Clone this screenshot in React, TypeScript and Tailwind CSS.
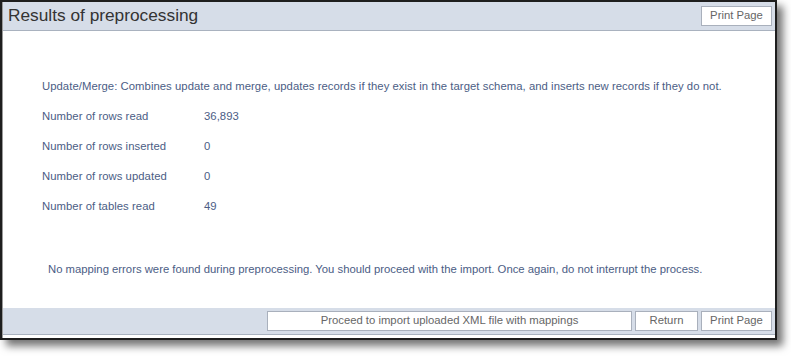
import React from 'react';

const stats = [
    { label: 'Number of rows read', value: '36,893' },
    { label: 'Number of rows inserted', value: '0' },
    { label: 'Number of rows updated', value: '0' },
    { label: 'Number of tables read', value: '49' },
];

function Btn({ children, className = '' }: { children: React.ReactNode; className?: string }) {
    return (
        <button
            className={`h-[20px] border border-[#a9b0bc] bg-white text-[11.3px] leading-none text-[#666666] ${className}`}
        >
            {children}
        </button>
    );
}

export default function App() {
    return (
        <div className="w-[791px] h-[356px] bg-white" style={{ fontFamily: '"Liberation Sans", Arial, sans-serif' }}>
            <div className="box-border w-[777px] h-[340px] border-2 border-[#1e1e1e] bg-white shadow-[6px_6px_8px_rgba(0,0,0,0.55)]">
                <div className="flex flex-col h-full border-l border-[#9a9a9a]">
                    {/* header */}
                    <div className="h-[29px] shrink-0 flex items-center justify-between pl-[5px] pr-[3px] bg-[#d6dde8] border-b border-[#a9b2bf]">
                        <h1 className="text-[17.3px] leading-none text-[#333333]">Results of preprocessing</h1>
                        <Btn className="w-[71px]">Print Page</Btn>
                    </div>

                    {/* body */}
                    <div className="flex-1 flex flex-col pl-[39px] pt-[48px] text-[11.3px] leading-[14px] tracking-[0.05px] text-[#4b5d85]">
                        <div className="flex flex-col gap-[16px]">
                            <p>Update/Merge: Combines update and merge, updates records if they exist in the target schema, and inserts new records if they do not.</p>
                            {stats.map(s => (
                                <div key={s.label} className="flex">
                                    <span className="w-[162px]">{s.label}</span>
                                    <span>{s.value}</span>
                                </div>
                            ))}
                        </div>
                        <p className="mt-[49px] pl-[6px] tracking-normal">
                            No mapping errors were found during preprocessing. You should proceed with the import. Once again, do not interrupt the process.
                        </p>
                    </div>

                    {/* footer */}
                    <div className="shrink-0 pb-[3px]">
                        <div className="h-[27px] flex items-center justify-end gap-[3px] pr-[3px] bg-[#d6dde8] border-b border-[#a9b2bf]">
                            <Btn className="w-[365px]">Proceed to import uploaded XML file with mappings</Btn>
                            <Btn className="w-[63px]">Return</Btn>
                            <Btn className="w-[71px]">Print Page</Btn>
                        </div>
                    </div>
                </div>
            </div>
        </div>
    );
}
